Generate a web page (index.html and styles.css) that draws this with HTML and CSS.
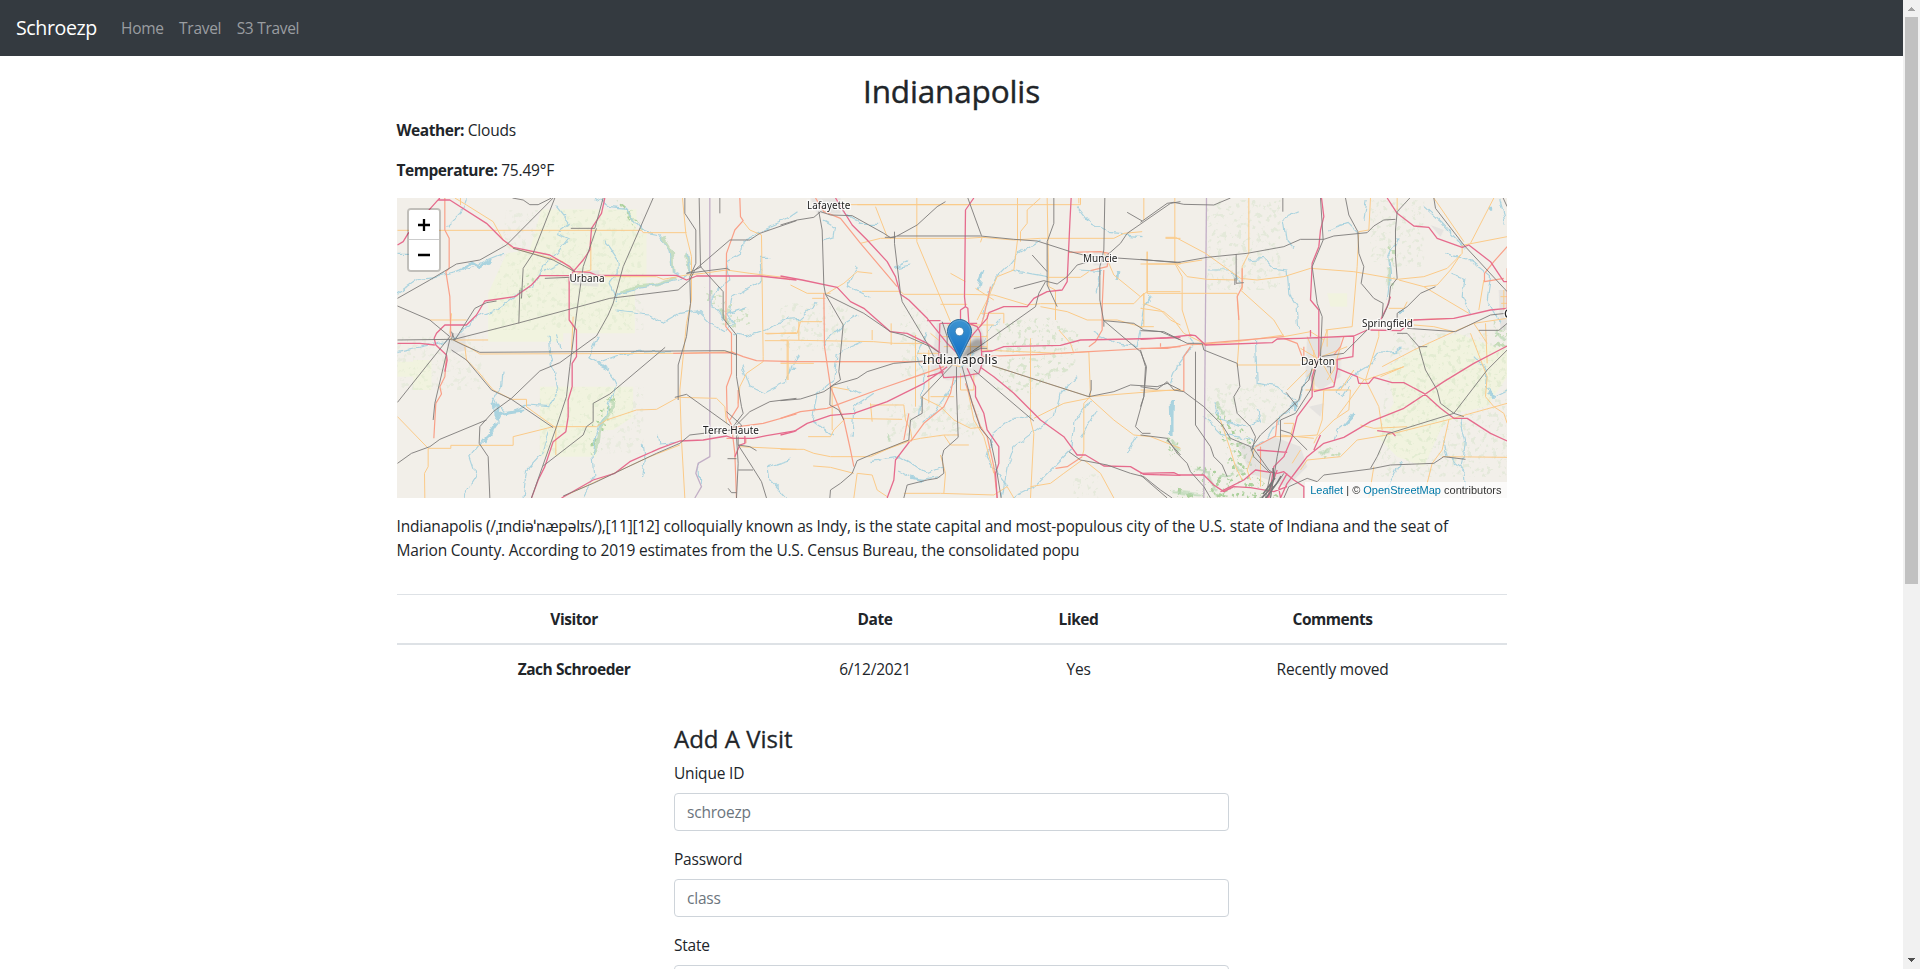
FILE: index.html
```html
<!DOCTYPE html>
<html lang="en">
<head>
<meta charset="utf-8">
<title>Indianapolis</title>
<link rel="stylesheet" href="styles.css">
</head>
<body>
<div class="page">
<nav class="navbar">
  <a class="brand">Schroezp</a>
  <a class="nav-link">Home</a>
  <a class="nav-link">Travel</a>
  <a class="nav-link">S3 Travel</a>
</nav>
<main class="container">
  <h2 class="title">Indianapolis</h2>
  <p class="fact"><b>Weather:</b> Clouds</p>
  <p class="fact"><b>Temperature:</b> 75.49°F</p>
  <div class="map">
    <svg class="tiles" width="1110" height="300" viewBox="0 0 1110 300">
      <defs>
        <filter id="wiggle" x="-5%" y="-5%" width="110%" height="110%"><feTurbulence type="fractalNoise" baseFrequency=".1" numOctaves="2" seed="4"/><feDisplacementMap in="SourceGraphic" scale="7" xChannelSelector="R" yChannelSelector="G"/></filter>
        <filter id="speckle" x="0" y="0" width="100%" height="100%"><feTurbulence type="fractalNoise" baseFrequency=".2" numOctaves="3" seed="9"/><feColorMatrix values="0 0 0 0 0  0 0 0 0 0  0 0 0 0 0  9 0 0 0 -5.1" result="n"/><feComposite in="SourceGraphic" in2="n" operator="in"/></filter>
      </defs>
      <rect width="1110" height="300" fill="#f2efe9"/>
      <g class="farm">
        <g transform="translate(-.5 -8) scale(.33333)">
          <path d="M435 58H720V130H750V290L715 300V430H500V455H275V310L330 190L400 180ZM430 590H710V680L650 720H600V800H430ZM50 510H105V600H50ZM3 515H50V560H3Z"/>
        </g>
        <g transform="translate(743.5 -8) scale(.33333)">
          <path d="M840 470L950 430L1060 470L1100 480V560L1040 650L940 670L900 720L850 830L770 800L700 730L760 640L740 530ZM560 310H620V350H570Z"/>
        </g>
      </g>
      <g filter="url(#speckle)">
        <g transform="translate(-.5 -8) scale(.33333)" fill="#add19e">
          <path d="M660 30L720 70L740 120L710 110ZM640 600L665 640L610 740L615 780L580 800L580 720Z"/>
          <path opacity=".5" d="M370 270L420 240L400 330L370 330ZM920 290L1060 360V440L970 400Z"/>
          <path opacity=".13" d="M330 60H740V420H280ZM430 590H740V790H430ZM1 440H260V600H1Z"/>
        </g>
        <g transform="translate(383.5 -8) scale(.33333)" fill="#add19e">
          <path opacity=".35" d="M640 400L800 380L900 430L880 530L760 610L640 600L660 500Z"/>
          <path opacity=".2" d="M0 340H200V480H0ZM320 640H600V740H320ZM880 860L960 850V924H880ZM360 350H440V560H360Z"/>
          <path d="M1150 740L1200 750V800H1170Z"/>
        </g>
        <g transform="translate(743.5 -8) scale(.33333)" fill="#add19e">
          <path d="M210 630L240 650L330 740L350 860L420 924H90V890L190 905L150 830L200 830L270 860L250 770Z"/>
          <path opacity=".6" d="M740 170L765 160L760 310L740 320ZM540 770L600 760L600 800L540 810ZM1060 390H1100V470H1060Z"/>
          <path opacity=".2" d="M200 30H420V300H200ZM690 30H850V230H690ZM760 430H1100V860H700ZM200 580H440V700H200Z"/>
        </g>
      </g>
      <g class="woods" filter="url(#wiggle)">
        <g transform="translate(-.5 -8) scale(.33333)"><path d="M690 60L715 90M800 140L825 180L830 245M870 190L878 240M670 305L720 290L780 285L840 265M648 630L650 650L610 710L605 760L590 790M940 300V330M965 360L1000 400"/></g>
        <g transform="translate(383.5 -8) scale(.33333)"><path d="M328 730V755M1170 755L1195 780"/></g>
        <g transform="translate(743.5 -8) scale(.33333)"><path d="M225 640L250 670M160 840L200 850L225 900M100 905L180 915M240 860L280 850M280 820L310 850M540 790L570 780M745 230V290M1070 420L1095 450"/></g>
      </g>
      <g class="urban">
        <g transform="translate(-.5 -8) scale(.33333)"><path d="M155 430L205 430L210 480L170 490L150 465ZM520 250L610 240L605 290L530 285Z"/></g>
        <g transform="translate(383.5 -8) scale(.33333)"><path d="M470 400L600 410L630 500L590 560L500 570L450 540ZM90 25H180V70H110ZM940 185L990 190V225H940Z"/></g>
        <g transform="translate(743.5 -8) scale(.33333)"><path d="M500 440L600 440L600 560L540 600L495 560ZM290 760L350 770L400 740L480 770L500 830L440 890L330 850ZM870 105L910 120L900 140ZM505 650L550 640L540 680ZM1075 300H1100V420H1080Z"/></g>
      </g>
      <g class="water" filter="url(#wiggle)">
        <g transform="translate(-.5 -8) scale(.33333)">
          <path d="M3 310L60 270L130 260L220 235L270 210L320 190M150 110L195 65L210 25M3 190H40M480 50L520 100L480 130L515 145L480 190L440 230L410 290L370 310L300 360L240 380L200 420L170 450L3 485M595 25L640 50L690 55L740 125L790 135L820 180L830 245L860 260M870 180L880 250L850 270L780 285L680 305L650 325M625 155L665 215L665 250L640 280L660 330M500 215L440 245M660 363L760 375L800 398L850 370L900 360L940 400L985 425L1010 400L990 370L1050 350M1200 65L1150 100L1080 130L1040 155L1035 190L990 215L1000 270L950 310L950 350L980 390M1090 205L1095 270L1010 320L1000 370M1120 205H1090M1150 395L1110 420L1050 440L1010 430M1035 520L1060 590L1100 610L1160 580L1190 530M455 440L460 490L475 560L485 600L460 650L390 645L330 670L300 640L290 620M320 545L315 590L290 630L305 700L260 750L220 800L240 860L200 924M480 430L490 480M605 440L580 500L640 540L660 580L640 640L620 690L600 720L590 800L595 860L560 924M640 540L600 520L680 490L760 485L830 485M455 725L435 790L390 840L380 924M740 760L745 800L735 860M785 730L790 765L840 760M905 810L910 880M1180 810L1115 830L1120 870L1170 924M1180 380L1150 400"/>
          <path class="lake" d="M200 240L225 215L250 230L285 210M287 640L305 650L300 690L310 670L380 660M300 700L265 755"/>
        </g>
        <g transform="translate(383.5 -8) scale(.33333)">
          <path d="M130 90L165 110L160 140L130 150M180 60L240 100L290 100M890 50L930 100L990 130L1080 140M390 225L340 235L380 215M270 325L200 290L230 230M230 375L190 400L140 450L130 470M0 390L60 385L110 340M240 460L170 490L160 570L110 610L95 690L160 735M280 610L220 650L215 740M20 575L30 530L60 490M440 430L410 500L430 560L420 680M520 570L490 630L430 700M660 385L620 430L600 470L540 530M610 240L590 300M720 180L680 230L640 270L600 400M690 240L800 260M700 200L780 150M1110 320L1090 350L1070 470L1000 460L940 430M900 240L960 245L950 310M890 560L840 610L820 680L700 770L680 830L665 924M750 680L700 685L640 730L620 800L650 850L680 890M930 630L880 700L870 780L800 850L760 890L690 924M270 815L360 800L440 850L490 830M350 840L410 870L480 860M200 590L240 610M1040 790L1070 740M950 660L900 740"/>
          <path class="lake" d="M605 245L597 290M1012 240L1009 270M1172 630L1175 735M395 865L430 872M36 530L45 540"/>
        </g>
        <g transform="translate(743.5 -8) scale(.33333)">
          <path d="M475 65L430 85L440 150L460 170M560 120L620 100L650 130M320 210L370 205L400 235L440 240L445 310L470 350L475 420M850 50L900 95L950 150L975 175M680 30L670 90M770 145L745 200L750 250L740 330M205 240L270 240L300 275M915 190L980 210L1020 235L1050 260L1040 330L1080 400M930 250L970 265L965 320L990 370M1075 30L1095 100M345 450L350 580L410 590L440 610L470 640L420 680L380 750L340 770M515 540L490 580L465 660M780 470L760 485L710 490L680 530L640 555L590 600L610 620L630 590M1000 500L1040 540L1035 590L1060 620L1100 600M145 440L160 460L110 530L90 580M35 320L10 350M220 640L240 690L300 710L360 690L350 655M190 680L240 730L340 750M910 750L920 800L970 840L975 895M960 690L975 750L965 830M780 810L760 860L730 910M640 680L590 720L580 750"/>
          <path class="lake" d="M96 630L93 730M612 705L640 670M775 370L790 360M1045 58H1055M1045 610L1065 620M460 640L465 660"/>
        </g>
      </g>
      <g class="border">
        <g transform="translate(-.5 -8) scale(.33333)"><path d="M940 24V800L905 820L898 850L915 890L895 924"/></g>
        <g transform="translate(743.5 -8) scale(.33333)"><path d="M198 24L190 924"/></g>
      </g>
      <g class="primary">
        <g transform="translate(-.5 -8) scale(.33333)">
          <path d="M3 121H735L740 128H870M175 24L210 45L290 95L320 150L350 175L500 215L530 245L545 255M192 24V45M583 145V240L545 250M545 260H780L800 268L870 255L920 250L990 240L1060 250L1160 262L1180 270M858 24L868 130L885 200L885 330L870 400L860 500L850 600L855 750L865 924M1040 95L1060 120L1095 135L1100 500V515L1050 550L1030 590L1025 640M1105 430H1200M1105 452H1175V570M1110 432L1200 428M100 390H210M170 450H275M160 445L215 470L250 492L850 490L1010 485M205 470L210 510L245 545L290 600L345 628H390V650L410 665L480 715M3 680L95 775H163V766H350V740L470 710H600L630 690L720 660L780 658L845 622L960 625L985 650L990 700M478 715V795M95 775V830L84 850L85 924M850 765L760 800L500 920M1030 770L1200 778M160 430L165 370M530 380L525 480"/>
        </g>
        <g transform="translate(383.5 -8) scale(.33333)">
          <path d="M190 44H900V24M230 44H560M285 50L320 140M409 24V155L510 395M240 160L300 145H560L605 142L700 150L780 145H1000L1030 130L1085 125M605 142L600 157M711 24V150L700 240L650 260L620 330L590 390M780 24L740 60V100L720 125V155M800 24L805 290L825 300V390M895 24V40M140 310L190 280L230 245L275 250M245 304H360L370 313H550L640 315L740 345L780 341H1060L1090 310V340L1140 360L1170 390L1200 405M480 343H560M0 430H50L60 395H125M55 395V450M30 285L80 310H150M95 325H135M0 450L280 455L340 460H430M332 400V465M275 420V450M405 435V650M20 450V570M410 490H480M510 250L555 275M585 295L640 330M600 370H670V400M970 185L1000 255L1080 320L1100 305H1200M1100 185V310M1100 222H1200M1155 145H1200M800 262H900L925 245M780 350L860 365L920 390H1010L1080 410H1120M750 445V690L760 730L750 924M880 490L870 460L835 420M600 480L840 490L925 485L930 620L910 640V780L905 800M635 527L925 620L1200 598M925 622L1000 690L1060 735L1110 740L1200 775M760 685L850 640L925 625M0 520H100M120 515H470L540 530M270 645H370L375 690L390 720L395 750L340 770L270 795M270 640L275 695M190 685L365 688M150 590L205 600M155 590V720M83 740H150L160 720L190 690M0 778H70L100 790L150 800H270L370 755L420 745L490 735H535M490 735L510 765H565M420 620L480 650L520 690L570 715L605 712M540 550V600H580V550M560 590L580 690L610 740L640 850M230 850L220 924M230 850L275 855L290 900L320 920M370 910H480L640 915L680 890L700 924M480 795L495 850L490 910M98 828L150 832L220 850M905 810L850 850L810 880L750 890M910 810L960 850L1000 924M500 405H640M530 420V500M570 415V515M480 440H620M480 455L450 430M490 470H620M620 375V480M450 620H520M445 480V640"/>
        </g>
        <g transform="translate(743.5 -8) scale(.33333)">
          <path d="M10 24V90M103 24V220L125 260V360L150 440M325 24V190L305 230V300M0 222H110L185 210M75 142H105L195 190L300 265L350 270L430 260L510 235L640 245L770 268L850 260L920 235L965 190V165M20 185V310H290L295 380V460L290 530M110 225L140 260L200 268L290 270M0 355L70 365L100 390L130 430L200 465M10 310V410L0 412M300 300L400 390L430 440L510 425L550 450M150 465L290 455L430 435M290 525H480M690 24L685 120L655 125L650 230L635 410L555 420M770 24L770 60M775 270L850 290L985 370M850 290L890 285L930 240L960 195M880 24L970 155M1060 24L990 160M970 165L1100 140M1015 360L1030 270M800 390L940 385M745 355H790L800 335M940 425L880 410L820 405M940 425L1000 400L1100 385M440 600L500 540M510 600L600 600L640 540M500 440L530 510L560 420M480 475L530 505L620 470M560 420V470M480 510H600M500 560L540 510L580 580M520 480V600M600 470L580 540L560 570M495 600H630L625 660L580 690L530 740L520 760M670 570L620 640L590 680M675 570L790 530L720 560M675 570L715 440V420M675 570L650 560M675 570L715 650L725 720M725 530L820 480L940 425M990 430L1040 560L1035 620L1060 650L1090 670L1100 700M0 600L130 602M550 600L545 690L530 735M420 735L520 745M400 740L460 740L530 735M345 770L320 840L330 870M660 705L700 715L800 710M480 840L500 810L600 800L650 750L740 735L920 690L1100 640M925 690L905 780L875 820L855 900M905 800L1100 802M700 830L685 924M1040 460L1000 400M240 690L270 780L285 830L305 870M360 770V890M430 700H460L450 740M455 820L480 780M1090 300V360M1080 320H1100M1082 340H1100M1035 400L1040 520"/>
        </g>
      </g>
      <g class="trunk">
        <g transform="translate(-.5 -8) scale(.33333)">
          <path d="M145 24V120L158 145V235L148 245L160 320L163 440M150 500L145 560L130 590L135 612L118 640L112 745M1030 24L1032 80L1040 92L1015 120L990 190L988 410L1005 430V550L990 590L992 680L1005 705L1015 790L1020 924M830 490L1010 488L1040 500L1080 512L1200 515M1010 712L1100 700L1200 672M990 745H1048V760M1025 600V650L1000 690"/>
        </g>
        <g transform="translate(383.5 -8) scale(.33333)">
          <path d="M105 24L130 65L180 85L240 160L350 290M0 515H430M130 310L132 470L150 590L190 690L210 780L220 830M0 685L60 665L140 655L290 600L490 530M520 560L510 610L490 650L430 700L390 755M385 670L370 750M865 187L960 185L985 190L980 230L930 242M970 240L965 350M965 350V420L945 455L925 470M600 500L780 493L925 485L1200 470M630 290L610 380L600 410M555 580L600 710L620 740L640 830L650 924M905 800L860 830L825 835"/>
        </g>
        <g transform="translate(743.5 -8) scale(.33333)">
          <path d="M305 235V290L290 320L295 390M0 475H80L150 462L200 465M150 470L130 500V605M1100 170L1060 215L1032 250V275L1090 265M1100 235V360M430 445L470 460L485 500M610 440L600 470L580 495M490 470V500M345 770L405 738L410 690M360 820V770M60 460V470M190 460L430 440"/>
        </g>
      </g>
      <g class="motor">
        <g transform="translate(-.5 -8) scale(.33333)">
          <path d="M3 165L20 155L35 130L120 35L130 24M125 30H160L270 100L320 150L350 172L460 195L520 230L535 245L580 247L600 256H840L870 270L900 258H1090L1200 270M625 24L615 70L585 115L580 180L560 210L530 245L518 265V390L540 420V500L527 520V590L515 630V680L508 725L470 755L445 830L425 870L405 924M518 257H430L405 285L355 320L265 333L240 375L210 405H145L120 430L113 445L118 465L150 495L152 510L145 545M3 460H70L115 465M495 924L590 870L655 850L700 815L790 775L850 753L920 750L990 738L1010 745H1070L1110 737L1200 722M1045 738V760L1030 765L1015 800"/>
        </g>
        <g transform="translate(383.5 -8) scale(.33333)">
          <path d="M165 24L215 105L260 150L320 215L345 260L360 313L385 330L440 385L500 460L540 500M0 258L65 270L170 292L210 335L250 355L330 425L380 430L440 460L480 490M0 735L40 725L80 700L150 676L220 670L320 635L430 580L480 545L500 530M550 24M580 24L555 60L552 320L555 350L562 355L565 400L590 410L600 430L605 520L595 550L540 560L490 563L475 520L478 400M555 350L540 360V390M480 392H440M480 400L590 400M625 368L670 350H740L760 325L800 305L845 300L860 275L868 100L872 24M625 368L620 385L580 430L550 470M605 485L635 483L670 470L840 466L900 450L1050 447L1200 443M600 532L640 560L700 610L780 690L850 740L890 795H915L970 828L1050 830L1090 853L1200 856M560 535L585 590V620L610 670L620 720L655 770V820L645 850L650 924M387 755L345 810L340 870L320 924M440 560L490 545"/>
        </g>
        <g transform="translate(743.5 -8) scale(.33333)">
          <path d="M0 448L80 443L150 435L165 437L195 465L395 458L410 447L480 445L640 438L680 420L780 422L820 390L940 385L1050 360L1100 355M543 24L550 80L540 120L535 170L515 220L510 330L535 360V500L515 560V620L470 680L455 740L430 800L400 830L385 924M740 24L770 70L820 108L865 112L890 145L965 172L985 165L1050 215L1090 275H1100M750 320L740 350L720 390M640 440L637 500L590 508V540L580 590L520 605M510 420V440M590 535L650 560L655 580L685 580L700 562L755 578H790L850 610L900 655L940 685L980 685L1050 730L1100 753M1100 468L1000 520L910 575L790 655L690 695L610 742L550 760L500 800L470 840L440 880L420 924M540 735L520 780M710 722L755 728L765 738M0 850L100 848L115 855L190 855L220 885L250 905L280 890L330 893L400 905L440 890M240 905L310 870L345 840L410 850L430 845L460 870L490 890V924M350 780L440 787M410 840L380 924M440 850L415 895L420 924"/>
        </g>
      </g>
      <g class="rail">
        <g transform="translate(-.5 -8) scale(.33333)">
          <path d="M348 24L380 30L400 44H425L465 24M470 24L330 165L250 210L180 222L100 270L3 325M475 24L410 190L380 235L375 325M370 300L367 400M523 115H595L620 24M600 115L560 230L543 350L520 530L510 620L480 710L405 924M350 175L410 192L470 210L535 245M445 265L520 262M770 24L680 230L650 340L635 375L600 438L490 518L430 543L345 625L290 665L250 710L248 760L275 800L280 924M3 348L100 390L160 440L3 637M165 425L175 450L235 355L270 338L300 333M3 450L165 448L170 430M165 450L370 398L640 325L845 300L880 270L895 240L1000 150H1060L1090 130L1200 92M160 448L115 640L110 690M170 450L200 465L250 487L985 482L1020 495M165 480L210 510L285 600L345 628L470 713M3 820L45 790L100 770L130 748L270 690M806 472L640 612L590 640V695L570 710L560 735L440 828M865 24V70L898 120V220L880 260L882 340L870 440L845 525V630M908 24L912 230L980 305V385L1020 435V560L1035 650L1040 670L1010 710M915 230L885 245L870 250L990 235L1000 240M970 24V70M835 622L870 613L1005 710M990 665L1035 705L1020 740L1025 820L1020 924M1005 720L1060 665L1120 635L1200 625M1005 720L880 735L850 760L780 790L590 880L500 918M1025 740V765L1060 770L1080 782M1025 765L1070 835L1095 875L1110 924M1025 840H1070M993 806H1020M995 895L1005 908H1020"/>
        </g>
        <g transform="translate(383.5 -8) scale(.33333)">
          <path d="M0 105L50 90L100 82L120 65L150 75L215 77L310 130L330 143L350 138H600L700 148L770 153L870 185L920 198L1200 217M495 35L470 50L410 105L350 138M342 125V160L360 310L365 335L440 460L460 500M313 142H345M115 65L125 120L130 285L135 313L188 405L175 545L180 570L150 590L148 645L175 660L190 690M135 313L250 370L330 425L370 435L450 470L480 490M0 632L60 627L130 605L160 585L230 565L260 545L340 520L430 513M562 24L603 137M820 24V100L800 155V245L800 285L830 350M973 24L970 180L958 230V330L970 395V410M1200 35L1170 40L1040 130L1020 160L975 200M1040 67L1085 93M755 195L800 245M700 296L790 272L830 282L860 260L890 225L925 215M795 275L775 310L765 350L560 495M970 392L1060 400L1090 420L1140 425L1200 450M970 392L1080 485L1098 530L1090 620L1065 710L1085 730H1110M760 693L580 540M635 527L925 620L1000 605L1050 585L1130 590L1160 580L1200 600M932 570V600L925 620M520 520L425 620V670L390 690L385 750L270 795L230 812L215 850L180 880L150 900L148 924M545 530L575 640L600 715L630 750L645 820L662 924M528 530V600L533 742L490 780L485 800L490 850L470 865L440 870L380 885L370 924M865 785L900 810L980 825L1050 850L1090 860L1140 900L1175 924M485 395L500 440V490M560 495L600 475H620M1160 750L1200 795"/>
        </g>
        <g transform="translate(743.5 -8) scale(.33333)">
          <path d="M0 97L80 40L100 37L130 43L220 45L270 24M0 208L110 218L200 202L320 190L430 170L480 148H550L580 138L680 128L700 108L730 90L765 88M427 24V65M287 192V280L310 278M283 265V285M540 24L548 150L515 230L530 340L545 380L540 500M615 24L625 75L652 125L655 190L670 230L662 280L700 325L728 340L725 380M808 24L770 65L765 120V200L770 265L750 290L745 340L725 385M880 24L885 55L970 165L1100 305M1088 24L1100 50M885 290L840 310L800 350L770 370V400M720 390L680 420L610 490L540 500M800 415L945 425L1050 375L1095 370M1015 421H1075L1100 400M770 430L800 430L835 470H860M835 470L855 540L890 600L900 640L940 670L970 680M1100 480L1040 540L940 670L740 732L710 800L690 835M0 480L15 530L10 620L0 650M0 590L50 598L80 575L100 600L130 605L190 650L245 705L270 745L330 770L340 800L390 850L375 924M165 485V705L210 770L220 800L245 825L260 860M0 422L70 425L140 460L185 460L190 480L290 520L298 590L280 620L290 670L330 710L345 740L335 780M0 735L80 745L110 790L140 820L150 845L190 890L210 924M0 855L80 924M515 535L505 570L485 590L475 630L420 680L360 735L335 770L385 840L400 850L390 924M525 540L510 600L465 670L420 690V750L410 800L390 924M437 607L470 650M420 720L450 730L500 780M560 530H570V550M360 924L410 880L430 850M430 924L445 890L500 865L530 875L550 855L690 837L750 825L880 820L910 800L975 808"/>
        </g>
      </g>
      <path class="railheavy" d="M865 300L872 292L877 280L876 270M869 300L880 285L884 278M866 296L878 280"/>
      <g class="places">
        <text x="172.500" y="83.500" textLength="35">Urbana</text>
        <text x="306" y="236" textLength="56">Terre Haute</text>
        <text x="410" y="10.500" textLength="43.500">Lafayette</text>
        <text x="686" y="63.500" textLength="34.500">Muncie</text>
        <text x="965" y="128.500" textLength="51">Springfield</text>
        <text x="904" y="167" textLength="34">Dayton</text>
        <text class="big" x="525.500" y="165.500" textLength="75">Indianapolis</text>
        <text class="big" x="1107" y="120">C</text>
      </g>
    </svg>
    <svg class="marker" width="50" height="42" viewBox="0 0 50 42">
      <defs>
        <linearGradient id="pin" x2="0" y2="1"><stop stop-color="#3d94d0"/><stop offset="1" stop-color="#126fc6"/></linearGradient>
        <filter id="soft"><feGaussianBlur stdDeviation="1.500"/></filter>
      </defs>
      <path d="M13 40L22 25Q29 17 35 21Q38 27 30 32Z" fill="#000" opacity=".28" filter="url(#soft)"/>
      <path d="M12.500.5C5.800.5.500 5.900.500 12.500C.5 15 1.600 18 2.700 20.200L12.500 40L22.300 20.200C23.400 18 24.500 15 24.500 12.500C24.500 5.900 19.200.5 12.500.5Z" fill="url(#pin)" stroke="#2e6c97"/>
      <path d="M12.500 1.600C6.400 1.600 1.600 6.400 1.600 12.500C1.600 15 2.600 17.600 3.700 19.800L12.500 37.500L21.300 19.800C22.400 17.600 23.400 15 23.400 12.500C23.400 6.400 18.600 1.600 12.500 1.600Z" fill="none" stroke="#fff" opacity=".14"/>
      <circle cx="12.500" cy="12.500" r="4.200" fill="#fff" stroke="#2e6c97" stroke-width=".6"/>
    </svg>
    <div class="zoom">
      <span class="zoom-in"><svg width="14" height="14"><path d="M7 1V13M1 7H13" stroke="#000" stroke-width="2.300"/></svg></span>
      <span><svg width="14" height="14"><path d="M1 7H13" stroke="#000" stroke-width="2.300"/></svg></span>
    </div>
    <div class="attribution"><a>Leaflet</a> | © <a>OpenStreetMap</a> contributors</div>
  </div>
  <div class="about">Indianapolis (/ˌɪndiəˈnæpəlɪs/),[11][12] colloquially known as Indy, is the state capital and most-populous city of the U.S. state of Indiana and the seat of<br>Marion County. According to 2019 estimates from the U.S. Census Bureau, the consolidated popu</div>
  <table class="visits">
    <colgroup><col class="c1"><col class="c2"><col class="c3"><col class="c4"></colgroup>
    <thead><tr><th>Visitor</th><th>Date</th><th>Liked</th><th>Comments</th></tr></thead>
    <tbody><tr><th>Zach Schroeder</th><td>6/12/2021</td><td>Yes</td><td>Recently moved</td></tr></tbody>
  </table>
  <form class="form">
    <h4 class="form-title">Add A Visit</h4>
    <label class="lab">Unique ID</label><input class="input" placeholder="schroezp">
    <label class="lab">Password</label><input class="input" placeholder="class">
    <label class="lab">State</label><input class="input">
  </form>
</main>
</div>
<aside class="scrollbar">
  <svg width="17" height="17"><path d="M8 7h1v1h1v1h1v1h1v1H5v-1h1V9h1V8h1z" fill="#a3a3a3"/></svg>
  <div class="thumb"></div>
  <svg class="down" width="17" height="17"><path d="M5 6h7v1h-1v1h-1v1H9v1H8V9H7V8H6V7H5z" fill="#505050"/></svg>
</aside>
</body>
</html>
```

FILE: styles.css
```css
* { box-sizing: border-box; }
body {
  margin: 0;
  height: 969px;
  overflow: hidden;
  display: flex;
  background: #fff;
  color: #212529;
  font: 15.500px/24px "Open Sans", "Noto Sans", sans-serif;
  letter-spacing: -.2px;
}
.page { width: 1903px; height: 969px; overflow: hidden; }
.navbar { height: 56px; background: #343a40; display: flex; align-items: center; padding: 0 16px; color: #9a9da0; }
.brand { color: #fff; font-size: 19.600px; width: 97px; margin-right: 8px; letter-spacing: -.4px; }
.nav-link { margin-right: 15.500px; letter-spacing: -.3px; }
.container { width: 1110px; margin: 0 auto; padding-top: 16px; }
.title { margin: 0 0 8px; font-size: 31.500px; line-height: 38.400px; font-weight: 500; text-align: center; letter-spacing: -.15px; -webkit-text-stroke: .4px #212529; }
.fact { margin: 0 0 16px; }
b, th { font-weight: 700; letter-spacing: -.45px; }
.map { position: relative; height: 300px; overflow: hidden; background: #f2efe9; }
.tiles { display: block; }
.tiles path { vector-effect: non-scaling-stroke; }
.farm { fill: #f1f3df; }
.woods { fill: none; stroke: #b5d6b0; stroke-width: 3px; opacity: .7; }
.urban { fill: #dcdada; opacity: .6; }
.water, .border, .primary, .trunk, .motor, .rail, .railheavy { fill: none; stroke-linejoin: round; }
.water { stroke: #aad3df; stroke-width: 1.150px; }
.lake { stroke-width: 3px; }
.border { stroke: #c2aec6; stroke-width: 1.300px; }
.primary { stroke: #fbca88; stroke-width: 1px; }
.trunk { stroke: #f9a088; stroke-width: 1.200px; }
.motor { stroke: #e66b8d; stroke-width: 1.300px; }
.rail { stroke: #7d7b79; stroke-width: .9px; }
.railheavy { stroke: #777; stroke-width: 1.500px; }
.places { font: 10px "Noto Sans", sans-serif; letter-spacing: 0; fill: #222; stroke: rgba(255,255,255,.75); stroke-width: 2.500px; paint-order: stroke; }
.big { font-size: 12.500px; }
.marker { position: absolute; left: 550px; top: 121px; }
.zoom { position: absolute; left: 10px; top: 10px; width: 34px; border: 2px solid rgba(0,0,0,.2); background-clip: padding-box; border-radius: 4px; overflow: hidden; }
.zoom span { height: 30px; background: #fff; display: flex; align-items: center; justify-content: center; }
.zoom .zoom-in { border-bottom: 1px solid #ccc; }
.attribution { position: absolute; right: 0; bottom: 0; padding: 0 5px; background: rgba(255,255,255,.7); font: 11px/16px "Liberation Sans", sans-serif; letter-spacing: 0; color: #333; white-space: nowrap; }
.attribution a { color: #0078a8; }
.about { margin: 15.500px 0 32px; white-space: nowrap; }
.visits { width: 1110px; table-layout: fixed; border-collapse: separate; border-spacing: 0; text-align: center; }
.visits th, .visits td { padding: 12px; }
.visits thead th { border-top: 1px solid #dee2e6; border-bottom: 2px solid #dee2e6; }
.c1 { width: 355px; }
.c2 { width: 247px; }
.c3 { width: 160px; }
.c4 { width: 348px; }
.form { width: 555px; margin: 32px auto 0; }
.form-title { margin: 0 0 7px; font-size: 24px; line-height: 28.800px; font-weight: 500; letter-spacing: 0; -webkit-text-stroke: .3px #212529; }
.lab { display: block; margin-bottom: 8px; }
.input { display: block; width: 100%; height: 38px; margin: 0 0 16px; padding: 6px 12px; border: 1px solid #ced4da; border-radius: 4px; font: inherit; letter-spacing: inherit; outline: 0; }
.input::placeholder { color: #6c757d; opacity: 1; }
.scrollbar { width: 17px; height: 969px; background: #f1f1f1; display: flex; flex-direction: column; align-items: center; }
.scrollbar svg { display: block; flex: none; }
.thumb { width: 13px; height: 567px; background: #c1c1c1; }
.down { margin-top: auto; }
```
